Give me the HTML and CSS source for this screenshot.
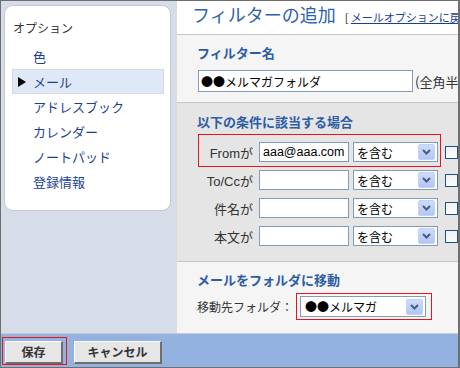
FILE: index.html
```html
<!DOCTYPE html>
<html lang="ja">
<head>
<meta charset="utf-8">
<link rel="stylesheet" href="styles.css">
</head>
<body>
<div class="frame">
  <div class="top">
    <aside class="side">
      <div class="card">
        <div class="card-title">オプション</div>
        <ul class="menu">
          <li class="item">色</li>
          <li class="item active"><span class="tri"></span>メール</li>
          <li class="item">アドレスブック</li>
          <li class="item">カレンダー</li>
          <li class="item">ノートパッド</li>
          <li class="item">登録情報</li>
        </ul>
      </div>
    </aside>
    <main class="main">
      <header class="head">
        <h1 class="title">フィルターの追加</h1>
        <span class="back">[ <a class="back-link">メールオプションに戻る</a> ]</span>
      </header>
      <section class="sec sec1">
        <h2 class="sec-title">フィルター名</h2>
        <div class="name-row">
          <div class="field name-field">●●メルマガフォルダ</div>
          <span class="note">(全角半角50文字以内)</span>
        </div>
      </section>
      <section class="sec sec2">
        <h2 class="sec-title">以下の条件に該当する場合</h2>
        <div class="conds">
          <div class="cond">
            <div class="cond-main hl hl-from">
              <span class="cond-label">Fromが</span>
              <div class="field cond-field latin">aaa@aaa.com</div>
              <div class="select cond-select"><span class="sel-text">を含む</span><span class="sel-btn"><svg width="9" height="6" viewBox="0 0 9 6"><path d="M1 1 L4.5 4.5 L8 1" fill="none" stroke="#4a5b86" stroke-width="2"/></svg></span></div>
            </div>
            <span class="check"></span>
          </div>
          <div class="cond">
            <div class="cond-main">
              <span class="cond-label">To/Ccが</span>
              <div class="field cond-field"></div>
              <div class="select cond-select"><span class="sel-text">を含む</span><span class="sel-btn"><svg width="9" height="6" viewBox="0 0 9 6"><path d="M1 1 L4.5 4.5 L8 1" fill="none" stroke="#4a5b86" stroke-width="2"/></svg></span></div>
            </div>
            <span class="check"></span>
          </div>
          <div class="cond">
            <div class="cond-main">
              <span class="cond-label">件名が</span>
              <div class="field cond-field"></div>
              <div class="select cond-select"><span class="sel-text">を含む</span><span class="sel-btn"><svg width="9" height="6" viewBox="0 0 9 6"><path d="M1 1 L4.5 4.5 L8 1" fill="none" stroke="#4a5b86" stroke-width="2"/></svg></span></div>
            </div>
            <span class="check"></span>
          </div>
          <div class="cond">
            <div class="cond-main">
              <span class="cond-label">本文が</span>
              <div class="field cond-field"></div>
              <div class="select cond-select"><span class="sel-text">を含む</span><span class="sel-btn"><svg width="9" height="6" viewBox="0 0 9 6"><path d="M1 1 L4.5 4.5 L8 1" fill="none" stroke="#4a5b86" stroke-width="2"/></svg></span></div>
            </div>
            <span class="check"></span>
          </div>
        </div>
      </section>
      <section class="sec sec3">
        <h2 class="sec-title">メールをフォルダに移動</h2>
        <div class="move-row">
          <span class="move-label">移動先フォルダ：</span>
          <div class="select move-select hl hl-move"><span class="sel-text">●●メルマガ</span><span class="sel-btn"><svg width="9" height="6" viewBox="0 0 9 6"><path d="M1 1 L4.5 4.5 L8 1" fill="none" stroke="#4a5b86" stroke-width="2"/></svg></span></div>
        </div>
      </section>
    </main>
  </div>
  <footer class="foot">
    <button class="btn btn-save hl hl-save">保存</button>
    <button class="btn btn-cancel">キャンセル</button>
  </footer>
</div>
</body>
</html>
```

FILE: styles.css
```css
* { box-sizing: border-box; }
html, body { margin: 0; padding: 0; }
body {
  font-family: "Liberation Sans", "Noto Sans CJK JP", sans-serif;
  font-size: 13px;
  color: #333;
  background: #fff;
}
.frame {
  width: 460px;
  height: 368px;
  border: 1px solid #6f6f6f;
  border-right-width: 2px;
  display: flex;
  flex-direction: column;
  overflow: hidden;
}
.top {
  display: flex;
  height: 332px;
}
.side {
  width: 176px;
  flex: none;
  background: #d6dde9;
  padding: 4px 0 0 3px;
}
.card {
  width: 167px;
  height: 206px;
  background: #fff;
  border: 1px solid #c6c8cc;
  border-radius: 9px;
  padding-top: 12px;
}
.card-title {
  font-family: "Noto Sans CJK JP", sans-serif;
  font-size: 12px;
  line-height: 20px;
  padding-left: 8px;
  color: #333;
}
.menu {
  list-style: none;
  margin: 6px 0 0 0;
  padding: 0;
}
.item {
  display: flex;
  align-items: center;
  height: 25px;
  margin: 0 6px 0 7px;
  border: 1px solid transparent;
  padding-left: 20px;
  font-family: "Noto Sans CJK JP", sans-serif;
  font-size: 13px;
  color: #1c3f95;
}
.item.active {
  background: #dfe8f6;
  border-color: #d6dae0;
  padding-left: 5px;
}
.tri {
  width: 0;
  height: 0;
  border-left: 8px solid #000;
  border-top: 5px solid transparent;
  border-bottom: 5px solid transparent;
  margin-right: 7px;
}
.main {
  flex: 1;
  min-width: 0;
  display: flex;
  flex-direction: column;
  overflow: hidden;
}
.head {
  height: 34px;
  flex: none;
  background: #fff;
  border-bottom: 1px solid #c6c6c6;
  display: flex;
  align-items: baseline;
  padding: 1px 0 0 15px;
  white-space: nowrap;
}
.title {
  margin: 0;
  flex: none;
  font-family: "Noto Sans CJK JP", sans-serif;
  font-weight: normal;
  font-size: 18px;
  line-height: 24px;
  color: #2f62ae;
}
.back {
  margin-left: 9px;
  flex: none;
  font-family: "Noto Sans CJK JP", sans-serif;
  font-size: 11px;
  color: #222;
}
.back-link {
  color: #1b3f97;
  text-decoration: underline;
}
.sec {
  padding-left: 20px;
  border-bottom: 1px solid #c6c6c6;
  white-space: nowrap;
}
.sec-title {
  margin: 0;
  font-family: "Noto Sans CJK JP", sans-serif;
  font-size: 13px;
  font-weight: bold;
  line-height: 18px;
  color: #2d5ca5;
}
.sec1 {
  height: 68px;
  background: #f5f5f5;
  padding-top: 9px;
}
.name-row {
  display: flex;
  align-items: center;
  margin-top: 8px;
}
.field {
  flex: none;
  background: #fff;
  border: 1px solid #7f9db9;
  font-family: "Noto Sans CJK JP", sans-serif;
  font-size: 12px;
  color: #000;
  display: flex;
  align-items: center;
  padding-left: 2px;
}
.name-field {
  width: 215px;
  height: 22px;
  margin-left: 1px;
}
.note {
  flex: none;
  margin-left: 2px;
  font-family: "Noto Sans CJK JP", sans-serif;
  font-size: 13px;
  color: #333;
}
.sec2 {
  height: 159px;
  background: #e5e5e5;
  padding-top: 10px;
}
.conds {
  margin-top: 11px;
  display: flex;
  flex-direction: column;
  gap: 8px;
}
.cond {
  display: flex;
  align-items: center;
  height: 20px;
}
.cond-main {
  flex: none;
  display: flex;
  align-items: center;
  margin-left: 2px;
  height: 20px;
}
.cond-label {
  flex: none;
  width: 54px;
  text-align: right;
  font-family: "Liberation Sans", "Noto Sans CJK JP", sans-serif;
  font-size: 13px;
  color: #333;
}
.cond-field {
  width: 90px;
  height: 20px;
  margin-left: 6px;
}
.latin {
  font-family: "Liberation Sans", sans-serif;
  font-size: 12.5px;
  padding-left: 3px;
}
.select {
  flex: none;
  background: #fff;
  border: 1px solid #7f9db9;
  display: flex;
  align-items: center;
  font-family: "Noto Sans CJK JP", sans-serif;
  font-size: 12px;
  color: #000;
}
.cond-select {
  width: 85px;
  height: 20px;
  margin-left: 4px;
}
.sel-text {
  flex: 1;
  padding-left: 3px;
}
.sel-btn {
  flex: none;
  width: 17px;
  height: 16px;
  margin-right: 2px;
  border: 1px solid #c2d2f4;
  border-radius: 2px;
  background: linear-gradient(#cbdbfb, #b3c7f3);
  display: flex;
  align-items: center;
  justify-content: center;
}
.check {
  width: 13px;
  height: 13px;
  margin-left: 7px;
  border: 1px solid #1c5180;
  background: linear-gradient(#f2f2f2, #fafafa);
  flex: none;
}
.sec3 {
  flex: 1;
  background: #f5f5f5;
  border-bottom: none;
  padding-top: 9px;
}
.move-row {
  display: flex;
  align-items: center;
  margin-top: 7px;
}
.move-label {
  flex: none;
  width: 103px;
  font-family: "Noto Sans CJK JP", sans-serif;
  font-size: 12px;
  color: #333;
}
.move-select {
  width: 126px;
  height: 21px;
}
.move-select .sel-text { padding-left: 4px; }
.hl { position: relative; }
.hl::after {
  content: "";
  position: absolute;
  border: 1px solid #e8141b;
  pointer-events: none;
}
.hl-from::after { top: -8px; bottom: -5px; left: -1px; right: -3px; }
.hl-move::after { top: -4px; bottom: -4px; left: -5px; right: -7px; }
.hl-save::after { top: -5px; bottom: -3px; left: -4px; right: -6px; }
.foot {
  height: 34px;
  flex: none;
  background: #94b2df;
  border-top: 1px solid #c8ccd2;
  display: flex;
  align-items: flex-start;
  padding: 7px 0 0 4px;
  gap: 11px;
}
.btn {
  height: 23px;
  margin: 0;
  padding: 0;
  background: #e6e6e6;
  border-top: 1px solid #fff;
  border-left: 1px solid #fff;
  border-right: 2px solid #6e6e6e;
  border-bottom: 2px solid #6e6e6e;
  font-family: "Noto Sans CJK JP", sans-serif;
  font-size: 12px;
  font-weight: bold;
  color: #333;
  line-height: 18px;
}
.btn-save { width: 58px; }
.btn-cancel { width: 88px; }
```
